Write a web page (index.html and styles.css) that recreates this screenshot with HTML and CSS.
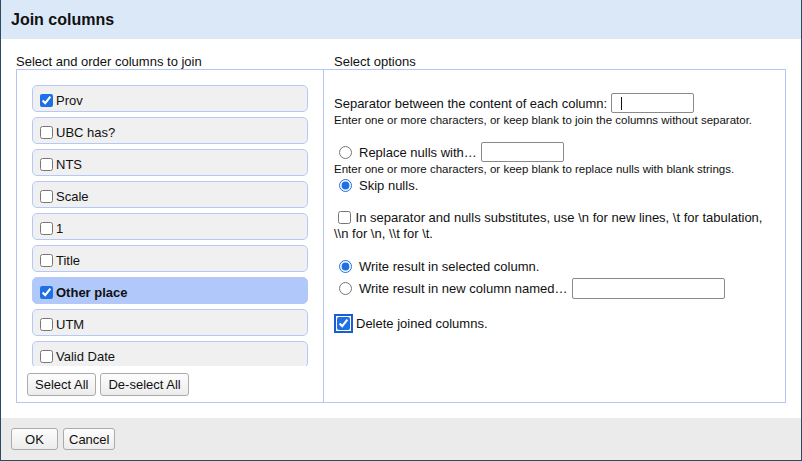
FILE: index.html
```html
<!DOCTYPE html>
<html>
<head>
<meta charset="utf-8">
<link rel="stylesheet" href="styles.css">
</head>
<body>
<div class="dialog">
  <div class="header">Join columns</div>
  <div class="body">
    <div class="panels">
      <div class="label">Select and order columns to join</div>
      <div class="label label-right">Select options</div>
      <div class="box box-left">
        <div class="list">
          <label class="item"><input type="checkbox" checked><span>Prov</span></label>
          <label class="item"><input type="checkbox"><span>UBC has?</span></label>
          <label class="item"><input type="checkbox"><span>NTS</span></label>
          <label class="item"><input type="checkbox"><span>Scale</span></label>
          <label class="item"><input type="checkbox"><span>1</span></label>
          <label class="item"><input type="checkbox"><span>Title</span></label>
          <label class="item item-selected"><input type="checkbox" checked><span>Other place</span></label>
          <label class="item"><input type="checkbox"><span>UTM</span></label>
          <label class="item"><input type="checkbox"><span>Valid Date</span></label>
        </div>
        <div class="list-buttons">
          <button class="btn">Select All</button>
          <button class="btn">De-select All</button>
        </div>
      </div>
      <div class="box box-right">
        <div class="row row-sep">
          <span>Separator between the content of each column:</span>
          <span class="field"><input type="text" class="text-input"><span class="caret"></span></span>
        </div>
        <div class="hint">Enter one or more characters, or keep blank to join the columns without separator.</div>
        <div class="row row-replace">
          <input type="radio" name="nulls" class="radio">
          <span>Replace nulls with…</span>
          <input type="text" class="text-input">
        </div>
        <div class="hint">Enter one or more characters, or keep blank to replace nulls with blank strings.</div>
        <div class="row row-skip">
          <input type="radio" name="nulls" class="radio" checked>
          <span>Skip nulls.</span>
        </div>
        <div class="escape">
          <input type="checkbox" class="check-inline"> In separator and nulls substitutes, use \n for new lines, \t for tabulation, \\n for \n, \\t for \t.
        </div>
        <div class="row row-write">
          <input type="radio" name="write" class="radio" checked>
          <span>Write result in selected column.</span>
        </div>
        <div class="row row-new">
          <input type="radio" name="write" class="radio">
          <span>Write result in new column named…</span>
          <input type="text" class="text-input text-wide">
        </div>
        <div class="row row-delete">
          <input type="checkbox" class="check-focus" checked>
          <span>Delete joined columns.</span>
        </div>
      </div>
    </div>
  </div>
  <div class="footer">
    <button class="btn btn-ok">OK</button>
    <button class="btn">Cancel</button>
  </div>
</div>
</body>
</html>
```

FILE: styles.css
```css
* { box-sizing: border-box; }

html, body {
  margin: 0;
  padding: 0;
  background: #ffffff;
}

body {
  font-family: "Liberation Sans", Arial, sans-serif;
  font-size: 13px;
  color: #111111;
}

.dialog {
  width: 802px;
  height: 461px;
  border: 1px solid #2d4a64;
  border-top: none;
  display: flex;
  flex-direction: column;
  background: #ffffff;
}

.header {
  height: 39px;
  background: #dae8f8;
  font-size: 16px;
  font-weight: bold;
  padding: 0 0 0 10px;
  line-height: 39px;
  color: #111;
}

.body {
  height: 379px;
  padding: 16px 15px 0 15px;
}

.panels {
  display: grid;
  grid-template-columns: 308px 462px;
  grid-template-rows: 14px 334px;
}

.label {
  line-height: 14px;
  padding-left: 0;
}

.label-right {
  padding-left: 10px;
}

.box {
  border: 1px solid #b4c7f4;
}

.box-left {
  padding-top: 15px;
}

.box-right {
  border-left: none;
  padding: 23px 10px 0 10px;
}

.list {
  margin: 0 15px;
  height: 281px;
  overflow: hidden;
  display: flex;
  flex-direction: column;
  gap: 5px;
}

.item {
  flex: 0 0 27px;
  display: flex;
  align-items: center;
  padding: 3px 7px 0 7px;
  background: #f0f0f0;
  border: 1px solid #b5c8f6;
  border-radius: 5px;
}

.item input {
  margin: 0 3px 0 0;
  width: 13px;
  height: 13px;
  accent-color: #1f6fe5;
}

.item-selected {
  background: #b1c8fb;
  font-weight: bold;
}

.list-buttons {
  display: flex;
  gap: 4px;
  padding: 7px 10px 0 10px;
}

.btn {
  font-family: "Liberation Sans", Arial, sans-serif;
  font-size: 13px;
  color: #111;
  height: 23px;
  padding: 0 7px;
  background: linear-gradient(#fdfdfd, #ececec);
  border: 1px solid #ababab;
  border-radius: 3px;
}

.footer {
  flex: 1;
  background: #ebebeb;
  padding: 10px 0 0 10px;
  display: flex;
  align-items: flex-start;
  gap: 5px;
}

.footer .btn {
  height: 22px;
  padding: 0 5px;
}

.footer .btn-ok {
  width: 47px;
}

.row {
  display: flex;
  align-items: center;
  line-height: 15px;
}

.row-sep {
  height: 20px;
}

.hint {
  font-size: 11.5px;
  line-height: 15px;
}

.row-replace {
  margin-top: 14px;
  height: 20px;
}

.row-skip {
  margin-top: 1px;
  height: 15px;
}

.radio {
  width: 13px;
  height: 13px;
  margin: 0 7px 0 5px;
  accent-color: #1f6fe5;
}

.text-input {
  width: 83px;
  height: 20px;
  margin: 0 0 0 4px;
  border: 1px solid #8a8a8a;
  border-radius: 2px;
  padding: 0 2px;
  font-size: 13px;
  background: #fff;
}

.text-wide {
  width: 153px;
  height: 21px;
}

.field {
  position: relative;
  display: inline-flex;
}

.caret {
  position: absolute;
  left: 14px;
  top: 4px;
  width: 1px;
  height: 13px;
  background: #111;
}

.escape {
  margin-top: 17px;
  line-height: 16px;
}

.check-inline {
  width: 13px;
  height: 13px;
  margin: 0 1px 0 4px;
  vertical-align: -2px;
  accent-color: #1f6fe5;
}

.row-write {
  margin-top: 17px;
}

.row-new {
  margin-top: 4px;
  height: 21px;
}

.row-delete {
  margin-top: 17px;
}

.check-focus {
  width: 13px;
  height: 13px;
  margin: 0 6px 0 3px;
  accent-color: #1f6fe5;
  outline: 2px solid #1a5fd0;
  outline-offset: 1px;
  border-radius: 2px;
}
```
